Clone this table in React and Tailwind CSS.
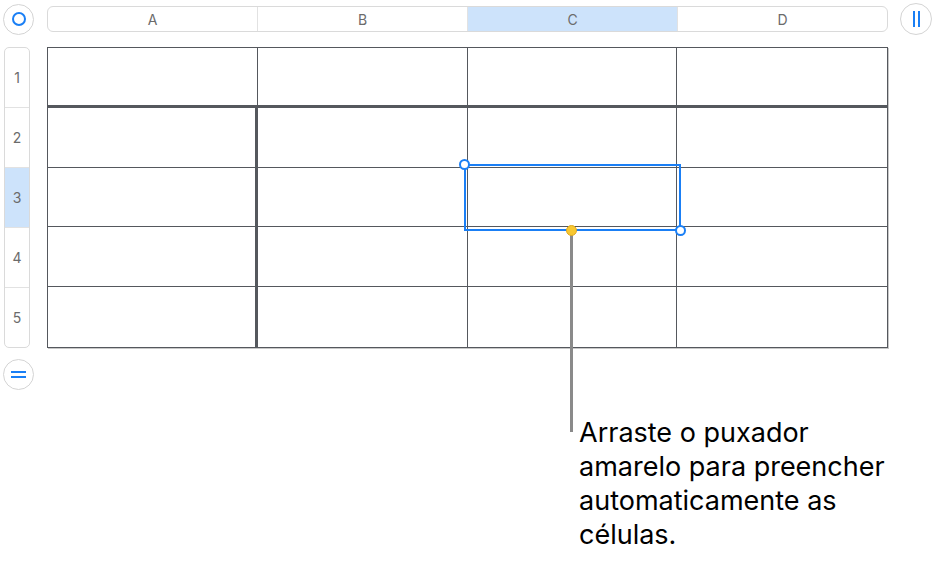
import React from "react";

const cols = ["A", "B", "C", "D"];
const rows = [1, 2, 3, 4, 5];

export default function App() {
  return (
    <div
      className="relative w-[935px] h-[566px] bg-white overflow-hidden"
      style={{ fontFamily: "Inter, 'Liberation Sans', sans-serif" }}
    >
      {/* top bar */}
      <div className="flex items-center pt-[3px] pl-[3px] h-[35px]">
        <div className="w-[31px] h-[31px] rounded-full border border-[#d4d4d4] bg-white flex items-center justify-center">
          <div className="w-[14px] h-[14px] rounded-full border-2 border-[#1a7ff5]" />
        </div>
        <div className="ml-[13px] w-[841px] h-[26px] rounded-[6px] border border-[#dadada] flex overflow-hidden">
          {cols.map((c, i) => (
            <div
              key={c}
              className={`flex-1 flex items-center justify-center text-[14px] text-[#6b6b6b] ${
                i < 3 ? "border-r border-[#e2e2e2]" : ""
              } ${c === "C" ? "bg-[#cde3fb]" : ""}`}
            >
              {c}
            </div>
          ))}
        </div>
        <div className="ml-[12px] w-[32px] h-[32px] rounded-full border border-[#d4d4d4] bg-white flex items-center justify-center gap-[3px]">
          <div className="w-[2px] h-[16px] bg-[#1a7ff5]" />
          <div className="w-[2px] h-[16px] bg-[#1a7ff5]" />
        </div>
      </div>

      {/* body */}
      <div className="flex mt-[12px]">
        <div className="flex flex-col w-[34px]">
          <div className="ml-[4px] w-[26px] h-[301px] rounded-[5px] border border-[#dadada] flex flex-col overflow-hidden">
            {rows.map((r, i) => (
              <div
                key={r}
                className={`flex-1 flex items-center justify-center text-[14px] text-[#6b6b6b] ${
                  i < 4 ? "border-b border-[#e2e2e2]" : ""
                } ${r === 3 ? "bg-[#cde3fb]" : ""}`}
              >
                {r}
              </div>
            ))}
          </div>
          <div className="ml-[3px] mt-[11px] w-[31px] h-[31px] rounded-full border border-[#d4d4d4] bg-white flex flex-col items-center justify-center gap-[3px]">
            <div className="w-[15px] h-[2px] bg-[#1a7ff5]" />
            <div className="w-[15px] h-[2px] bg-[#1a7ff5]" />
          </div>
        </div>

        {/* table */}
        <div className="ml-[13px] w-[841px] h-[301px] border border-[#55585d] grid grid-cols-4 grid-rows-5 shadow-[1px_1px_0_#c8c8c8]">
          {rows.map((r, ri) =>
            cols.map((c, ci) => (
              <div
                key={`${r}${c}`}
                className={`${ci < 3 ? (ci === 0 && ri > 0 ? "border-r-[3px]" : "border-r") : ""} ${
                  ri < 4 ? (ri === 0 ? "border-b-[3px]" : "border-b") : ""
                } border-[#55585d]`}
              />
            ))
          )}
        </div>
      </div>

      {/* selection overlay */}
      <div className="absolute left-[464px] top-[164px] w-[217px] h-[67px] border-2 border-[#1a7ff5]" />
      <div className="absolute left-[459px] top-[159px] w-[11px] h-[11px] rounded-full bg-white border-2 border-[#1a7ff5]" />
      <div className="absolute left-[675px] top-[225px] w-[11px] h-[11px] rounded-full bg-white border-2 border-[#1a7ff5]" />
      {/* callout line */}
      <div className="absolute left-[570px] top-[231px] w-[3px] h-[201px] bg-[#8a8a8a]" />
      <div className="absolute left-[566px] top-[225px] w-[11px] h-[11px] rounded-full bg-[#f8c830] border border-[#e0a820]" />

      {/* callout text */}
      <div className="absolute left-[579px] top-[416px] w-[350px] text-[27px] leading-[34px] text-black">
        Arraste o puxador
        <br />
        amarelo para preencher
        <br />
        automaticamente as
        <br />
        células.
      </div>
    </div>
  );
}
